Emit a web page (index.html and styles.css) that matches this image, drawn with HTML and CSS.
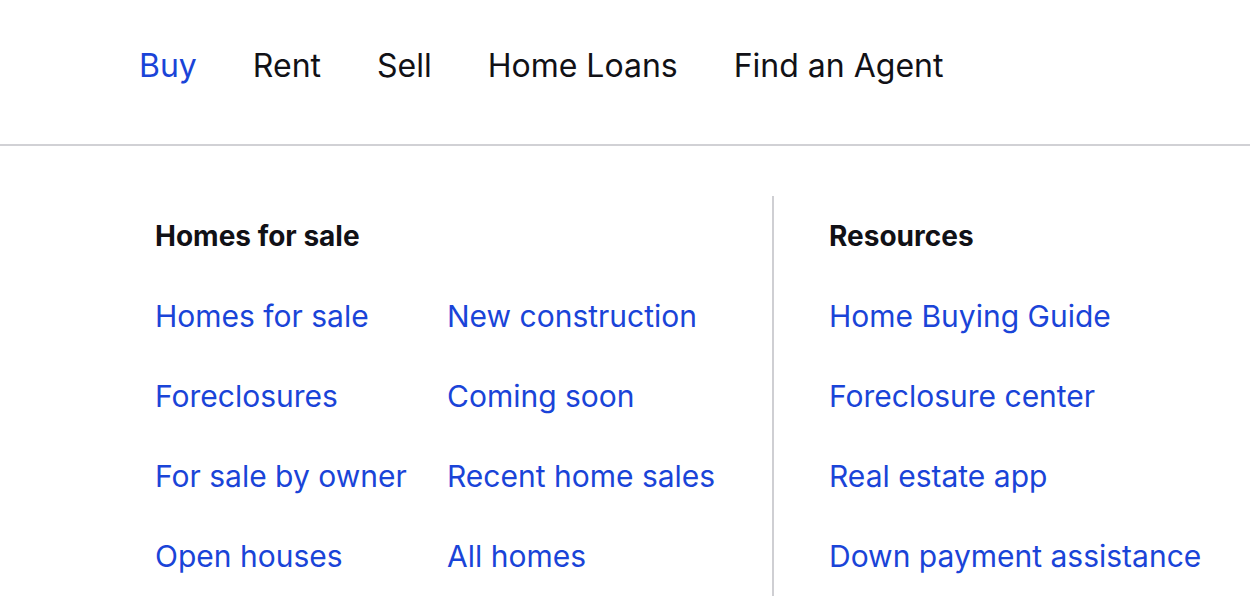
FILE: index.html
```html
<!DOCTYPE html>
<html lang="en">
<head>
<meta charset="utf-8">
<title>Buy menu</title>
<link rel="stylesheet" href="styles.css">
</head>
<body>
<header class="topnav">
  <a class="topnav-item active" href="#">Buy</a>
  <a class="topnav-item" href="#">Rent</a>
  <a class="topnav-item" href="#">Sell</a>
  <a class="topnav-item" href="#">Home Loans</a>
  <a class="topnav-item" href="#">Find an Agent</a>
</header>
<main class="menu">
  <section class="menu-main">
    <h3 class="menu-heading">Homes for sale</h3>
    <div class="link-grid">
      <a class="menu-link" href="#">Homes for sale</a>
      <a class="menu-link" href="#">New construction</a>
      <a class="menu-link" href="#">Foreclosures</a>
      <a class="menu-link" href="#">Coming soon</a>
      <a class="menu-link" href="#">For sale by owner</a>
      <a class="menu-link" href="#">Recent home sales</a>
      <a class="menu-link" href="#">Open houses</a>
      <a class="menu-link" href="#">All homes</a>
    </div>
  </section>
  <section class="menu-side">
    <h3 class="menu-heading">Resources</h3>
    <div class="link-list">
      <a class="menu-link" href="#">Home Buying Guide</a>
      <a class="menu-link" href="#">Foreclosure center</a>
      <a class="menu-link" href="#">Real estate app</a>
      <a class="menu-link" href="#">Down payment assistance</a>
    </div>
  </section>
</main>
</body>
</html>
```
FILE: styles.css
```css
* { box-sizing: border-box; }
html, body { margin: 0; padding: 0; background: #ffffff; }
body {
  font-family: Inter, "Liberation Sans", sans-serif;
  color: #111116;
  width: 1250px;
  height: 614px;
  overflow: hidden;
}
a { text-decoration: none; }

.topnav {
  display: flex;
  align-items: flex-start;
  gap: 56px;
  height: 146px;
  padding: 0 0 0 139px;
  border-bottom: 2px solid #d1d1d5;
}
.topnav-item {
  font-size: 32px;
  line-height: 132px;
  color: #111116;
}
.topnav-item.active { color: #1a44d8; }

.menu {
  display: flex;
  padding-top: 50px;
}
.menu-main {
  width: 774px;
  padding-left: 155px;
  border-right: 2px solid #cfcfd3;
  height: 400px;
}
.menu-side {
  padding-left: 55px;
  height: 400px;
}
.menu-heading {
  margin: 0;
  font-size: 28px;
  font-weight: 700;
  line-height: 80px;
  color: #111116;
}
.link-grid {
  display: grid;
  grid-template-columns: 292px auto;
  grid-auto-rows: 80px;
}
.link-list {
  display: grid;
  grid-auto-rows: 80px;
}
.menu-link {
  font-size: 30px;
  line-height: 80px;
  color: #1a44d8;
  white-space: nowrap;
}
```
